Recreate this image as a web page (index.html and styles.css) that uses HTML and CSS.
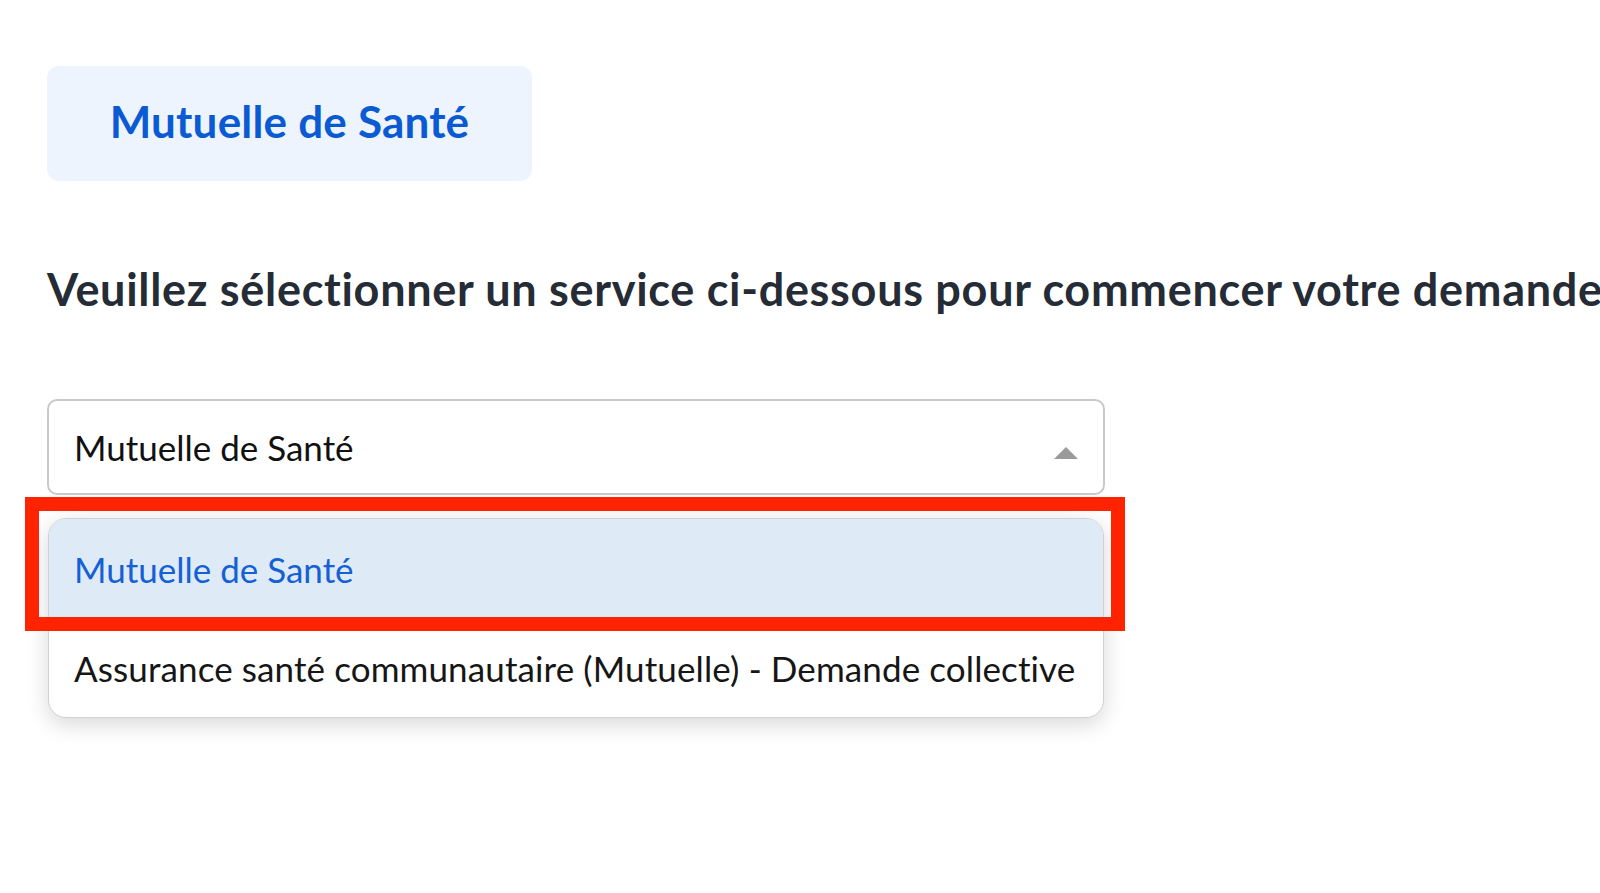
FILE: index.html
```html
<!DOCTYPE html>
<html lang="fr">
<head>
<meta charset="utf-8">
<title>Mutuelle de Santé</title>
<link rel="stylesheet" href="styles.css">
</head>
<body>
<main class="page">
  <div class="tab">Mutuelle de Santé</div>
  <h1 class="heading">Veuillez sélectionner un service ci-dessous pour commencer votre demande.</h1>
  <div class="select-wrap">
    <div class="select">
      <span class="select-value">Mutuelle de Santé</span>
      <span class="caret"></span>
    </div>
    <ul class="menu">
      <li class="option selected">Mutuelle de Santé</li>
      <li class="option">Assurance santé communautaire (Mutuelle) - Demande collective</li>
    </ul>
    <div class="highlight"></div>
  </div>
</main>
</body>
</html>
```
FILE: styles.css
```css
html, body {
  margin: 0;
  padding: 0;
  background: #ffffff;
  overflow: hidden;
}
body {
  width: 1600px;
  height: 893px;
  font-family: Lato, "Open Sans", sans-serif;
}
.page {
  display: flex;
  flex-direction: column;
  align-items: flex-start;
  padding: 66px 0 0 47px;
}
.tab {
  width: 485px;
  height: 115px;
  box-sizing: border-box;
  padding-bottom: 5px;
  border-radius: 12px;
  background: #edf4fd;
  color: #0a5bd3;
  font-weight: 700;
  font-size: 44px;
  letter-spacing: 0.2px;
  display: flex;
  align-items: center;
  justify-content: center;
}
.heading {
  margin: 82px 0 0 0;
  font-size: 45px;
  line-height: 53px;
  font-weight: 700;
  letter-spacing: 0.7px;
  color: #252c36;
  white-space: nowrap;
}
.select-wrap {
  position: relative;
  margin-top: 83px;
  width: 1058px;
}
.select {
  height: 96px;
  box-sizing: border-box;
  border: 2px solid #c9c9c9;
  border-radius: 10px;
  display: flex;
  align-items: center;
  justify-content: space-between;
  padding: 0 25px 0 25px;
  font-size: 35px;
  color: #111111;
}
.caret {
  width: 0;
  height: 0;
  border-left: 12px solid transparent;
  border-right: 12px solid transparent;
  border-bottom: 12px solid #9a9a9a;
  margin-top: 12px;
}
.menu {
  list-style: none;
  margin: 23px 0 0 1px;
  padding: 0;
  width: 1056px;
  height: 200px;
  box-sizing: border-box;
  border: 1px solid #d2d2d2;
  border-radius: 18px;
  overflow: hidden;
  background: #ffffff;
  box-shadow: 0 6px 22px rgba(0, 0, 0, 0.16);
  display: flex;
  flex-direction: column;
}
.option {
  flex: 1;
  display: flex;
  align-items: center;
  padding-left: 25px;
  font-size: 35px;
  letter-spacing: 0.11px;
  color: #161616;
}
.option.selected {
  background: #deebf7;
  color: #1560d4;
  letter-spacing: 0;
}
.highlight {
  position: absolute;
  left: -22px;
  top: 98px;
  width: 1100px;
  height: 134px;
  box-sizing: border-box;
  border: 14px solid #ff2300;
}
```
